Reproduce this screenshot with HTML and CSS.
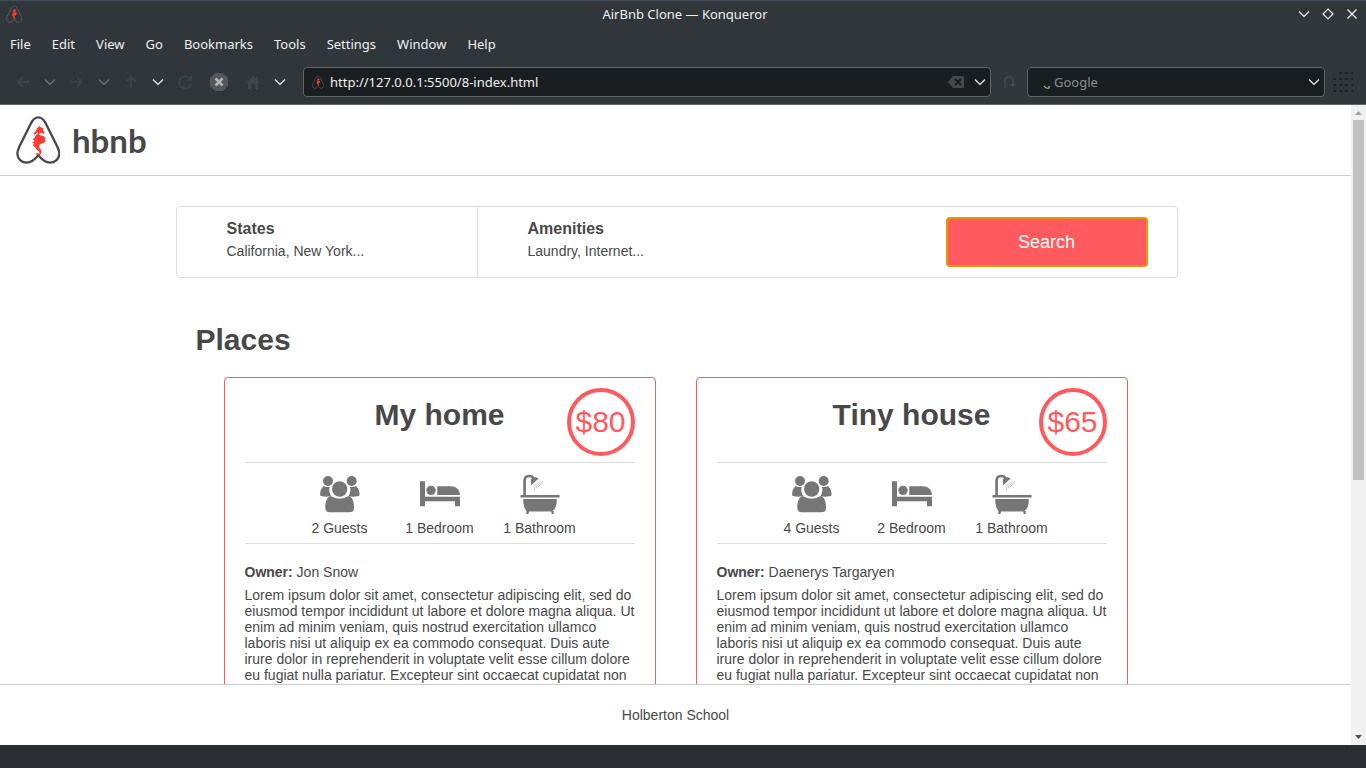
FILE: index.html
```html
<!DOCTYPE html>
<html lang="en">
<head>
<meta charset="utf-8">
<title>AirBnb Clone — Konqueror</title>
<link rel="stylesheet" href="styles.css">
</head>
<body>
<svg class="sprites" aria-hidden="true">
  <symbol id="logo" viewBox="48 36 132 144">
    <path d="M115 40C104 40 98 48 93 58L59 126C54 136 52 142 52 150C53 166 66 176 80 176C96 176 106 165 115 154C124 165 134 176 150 176C164 176 177 166 178 150C178 142 176 136 171 126L137 58C132 48 126 40 115 40Z" fill="none" stroke="currentColor" stroke-width="7" stroke-linejoin="round"/>
    <path d="M111 73L119 66L123 70L129 73L130 80L133 84L131 91L125 86L118 88L118 93L130 96L137 102L134 107L137 111L132 116L126 118L119 122L117 128L119 133L124 139L124 147L119 154L110 153L108 148L113 147L118 149L118 143L109 136L105 129L97 123L104 120L96 115L104 111L98 105L104 101L106 96L112 90L114 84L104 92L100 89L108 80Z" fill="#ff3b30"/>
  </symbol>
  <symbol id="chev" viewBox="0 0 12 8"><path d="M1 1.5L6 6.5L11 1.5" fill="none" stroke="currentColor" stroke-width="1.2"/></symbol>
  <symbol id="guests" viewBox="60 30 120 112">
    <g fill="currentColor"><circle cx="84" cy="47" r="15"/><circle cx="155" cy="47" r="15"/>
    <path d="M71 62C62 70 59 82 61 91Q75 96 94 93Q84 76 90 64Q80 67 71 62Z"/><path d="M168 62C177 70 180 82 178 91Q164 96 145 93Q155 76 149 64Q160 67 168 62Z"/>
    <circle cx="119" cy="71" r="23"/><path d="M92 92C80 96 76 110 76 127Q76 141 89 141H149Q162 141 162 127C162 110 158 96 146 92Q119 108 92 92Z"/></g>
  </symbol>
  <symbol id="bed" viewBox="0 0 120 76"><g fill="currentColor"><path d="M0 0H15V46H120V75H105V60H15V75H0Z"/><circle cx="33" cy="27" r="14"/><path d="M52 15H91C108 15 119 25 120 41H52Z"/></g></symbol>
  <symbol id="bath" viewBox="210 26 120 122">
    <path d="M223 92V47C223 28 247 28 251 42" fill="none" stroke="currentColor" stroke-width="8"/>
    <g fill="currentColor"><path d="M243 60L242 43Q247 34 258 36L266 40Z"/><rect x="210" y="90" width="120" height="8" rx="3"/><path d="M219 102H321V114Q319 133 308 139H312V147Q308 150 305 146V140H236V146Q232 150 228 147V137Q221 131 219 114Z"/></g>
    <path d="M254 61L272 48M253 68L281 47M252 74L276 55M265 65L269 62" fill="none" stroke="currentColor" stroke-width="2" stroke-dasharray="4 3"/>
  </symbol>
</svg>

<header class="titlebar">
  <svg class="app-icon" width="16" height="18"><use href="#logo"/></svg>
  <h1 class="window-title">AirBnb Clone — Konqueror</h1>
  <div class="window-buttons">
    <button aria-label="Minimize"><svg width="12" height="8"><use href="#chev"/></svg></button>
    <button aria-label="Maximize"><svg width="12" height="12" viewBox="0 0 12 12"><path d="M6 1L11 6L6 11L1 6Z" fill="none" stroke="currentColor" stroke-width="1.2"/></svg></button>
    <button aria-label="Close"><svg width="12" height="12" viewBox="0 0 12 12"><path d="M1.500 1.500L10.500 10.500M10.500 1.500L1.500 10.500" stroke="currentColor" stroke-width="1.3"/></svg></button>
  </div>
</header>
<nav class="menubar">
  <button>File</button><button>Edit</button><button>View</button><button>Go</button><button>Bookmarks</button><button>Tools</button><button>Settings</button><button>Window</button><button>Help</button>
</nav>
<div class="toolbar">
  <button class="tool dim" aria-label="Back"><svg width="14" height="12" viewBox="0 0 14 12"><path d="M13 6H2M7 1L2 6L7 11" fill="none" stroke="currentColor" stroke-width="2"/></svg></button>
  <button class="tool mid" aria-label="Back history"><svg width="12" height="8"><use href="#chev"/></svg></button>
  <button class="tool dim" aria-label="Forward"><svg width="14" height="12" viewBox="0 0 14 12"><path d="M1 6H12M7 1L12 6L7 11" fill="none" stroke="currentColor" stroke-width="2"/></svg></button>
  <button class="tool mid" aria-label="Forward history"><svg width="12" height="8"><use href="#chev"/></svg></button>
  <button class="tool dim" aria-label="Up"><svg width="12" height="14" viewBox="0 0 12 14"><path d="M6 13V2M1 7L6 2L11 7" fill="none" stroke="currentColor" stroke-width="2"/></svg></button>
  <button class="tool" aria-label="Up history"><svg width="12" height="8"><use href="#chev"/></svg></button>
  <button class="tool dim" aria-label="Reload"><svg width="16" height="16" viewBox="0 0 16 16"><path d="M13 5A6 6 0 1 0 14 10" fill="none" stroke="currentColor" stroke-width="2"/><path d="M15 1V7H9Z" fill="currentColor"/></svg></button>
  <button class="tool stop" aria-label="Stop"><svg width="18" height="18" viewBox="0 0 18 18"><path d="M5 0H13L18 5V13L13 18H5L0 13V5Z" fill="#53565a"/><path d="M5.500 5.500L12.500 12.500M12.500 5.500L5.500 12.500" stroke="#b4b6b8" stroke-width="2.500"/></svg></button>
  <button class="tool dim" aria-label="Home"><svg width="14" height="14" viewBox="0 0 14 14"><path d="M0 8L7 1L10 4V2H12V6L14 8H12V14H9V9H5V14H2V8Z" fill="#424446"/></svg></button>
  <button class="tool" aria-label="Home history"><svg width="12" height="8"><use href="#chev"/></svg></button>
  <div class="field address">
    <svg class="favicon" width="12" height="14"><use href="#logo"/></svg>
    <input type="text" aria-label="Location" value="http://127.0.0.1:5500/8-index.html">
    <button class="clear" aria-label="Clear location"><svg width="16" height="12" viewBox="0 0 16 12"><path d="M0 6L5 0H16V12H5Z" fill="#45484a"/><path d="M7 3L13 9M13 3L7 9" stroke="#1b1e20" stroke-width="2"/></svg></button>
    <button aria-label="Location history"><svg width="12" height="8"><use href="#chev"/></svg></button>
  </div>
  <button class="tool go" aria-label="Go"><svg width="13" height="14" viewBox="0 0 13 14"><path d="M1 12H3M2 10V6A4 4 0 0 1 10 6V9" fill="none" stroke="#43474a" stroke-width="2"/><path d="M6 9H13L10 13Z" fill="#43474a"/></svg></button>
  <div class="field engine">
    <svg width="8" height="16" viewBox="0 0 8 16"><path d="M1 12Q3 15 6 14V12" fill="none" stroke="#b4b6b8" stroke-width="1.200"/></svg>
    <input type="search" aria-label="Web search" placeholder="Google">
    <button aria-label="Search engines"><svg width="12" height="8"><use href="#chev"/></svg></button>
  </div>
  <div class="throbber"><svg width="20" height="22" viewBox="0 0 20 22"><path d="M6 2H20M0 8H20M0 14H20M0 20H20" stroke="#1f2225" stroke-width="2" stroke-dasharray="3 3"/></svg></div>
</div>

<div class="viewport">
  <div class="page">
    <header class="site-header">
      <a class="brand" href="#"><svg width="44" height="48"><use href="#logo"/></svg><span>hbnb</span></a>
    </header>
    <main class="content">
      <div class="container">
        <section class="filters">
          <div class="filter states"><h3>States</h3><h4>California, New York...</h4></div>
          <div class="filter"><h3>Amenities</h3><h4>Laundry, Internet...</h4></div>
          <button class="search">Search</button>
        </section>
        <section class="places">
          <h1>Places</h1>
          <div class="cards">
            <article class="card">
              <div class="price">$80</div>
              <h2>My home</h2>
              <ul class="info">
                <li><svg width="40" height="40"><use href="#guests"/></svg>2 Guests</li>
                <li><svg width="40" height="40"><use href="#bed"/></svg>1 Bedroom</li>
                <li><svg width="40" height="40"><use href="#bath"/></svg>1 Bathroom</li>
              </ul>
              <p class="owner"><strong>Owner:</strong> Jon Snow</p>
              <p class="description">Lorem ipsum dolor sit amet, consectetur adipiscing elit, sed do eiusmod tempor incididunt ut labore et dolore magna aliqua. Ut enim ad minim veniam, quis nostrud exercitation ullamco laboris nisi ut aliquip ex ea commodo consequat. Duis aute irure dolor in reprehenderit in voluptate velit esse cillum dolore eu fugiat nulla pariatur. Excepteur sint occaecat cupidatat non</p>
            </article>
            <article class="card">
              <div class="price">$65</div>
              <h2>Tiny house</h2>
              <ul class="info">
                <li><svg width="40" height="40"><use href="#guests"/></svg>4 Guests</li>
                <li><svg width="40" height="40"><use href="#bed"/></svg>2 Bedroom</li>
                <li><svg width="40" height="40"><use href="#bath"/></svg>1 Bathroom</li>
              </ul>
              <p class="owner"><strong>Owner:</strong> Daenerys Targaryen</p>
              <p class="description">Lorem ipsum dolor sit amet, consectetur adipiscing elit, sed do eiusmod tempor incididunt ut labore et dolore magna aliqua. Ut enim ad minim veniam, quis nostrud exercitation ullamco laboris nisi ut aliquip ex ea commodo consequat. Duis aute irure dolor in reprehenderit in voluptate velit esse cillum dolore eu fugiat nulla pariatur. Excepteur sint occaecat cupidatat non</p>
            </article>
          </div>
        </section>
      </div>
    </main>
    <footer class="site-footer">Holberton School</footer>
  </div>
  <div class="scrollbar">
    <svg width="15" height="15" viewBox="0 0 15 15"><path d="M4 10L7.500 6L11 10Z" fill="#a3a3a3"/></svg>
    <div class="track"><div class="thumb"></div></div>
    <svg width="15" height="15" viewBox="0 0 15 15"><path d="M4 5L7.500 9L11 5Z" fill="#505050"/></svg>
  </div>
</div>
<div class="statusbar"></div>
</body>
</html>
```

FILE: styles.css
```css
* { box-sizing: border-box; margin: 0; padding: 0; }
body {
  display: flex;
  flex-direction: column;
  height: 100vh;
  overflow: hidden;
  background: #31363b;
  color: #eff0f1;
  font: 13px "Noto Sans", sans-serif;
}
button, input { font: inherit; color: inherit; background: none; border: 0; outline: 0; }
svg { display: block; flex: none; }
.sprites { display: none; }

.titlebar {
  display: grid;
  grid-template-columns: 1fr auto 1fr;
  align-items: center;
  height: 28px;
  padding: 0 2px 2px 6px;
  border-top: 1px solid #434a59;
}
.app-icon, .favicon { color: #5a5e61; }
.window-title { font-size: 13px; font-weight: 400; }
.window-buttons { display: flex; justify-content: flex-end; }
.window-buttons button { display: flex; align-items: center; justify-content: center; width: 24px; height: 20px; }
.menubar { display: flex; align-items: center; gap: 21px; height: 32px; padding: 0 10px; }
.toolbar {
  display: flex;
  align-items: center;
  height: 45px;
  padding-left: 9px;
  border-bottom: 1px solid #626568;
}
.tool { display: flex; align-items: center; justify-content: center; width: 27px; height: 30px; }
.tool.dim { color: #3e4245; }
.tool.mid { color: #73777a; }
.tool.stop { width: 41px; }
.tool.go { width: 36px; }
.field {
  display: flex;
  align-items: center;
  height: 30px;
  border: 1px solid #626568;
  border-radius: 4px;
  background: #1b1e20;
}
.field input { flex: 1; min-width: 0; }
.field button { display: flex; padding: 0 4px; }
.address { flex: 1; margin-left: 10px; padding-left: 8px; gap: 6px; }
.address .clear { padding: 0; }
.engine { width: 298px; padding-left: 15px; gap: 3px; }
.engine input::placeholder { color: #8b8d8f; opacity: 1; }
.throbber { width: 41px; padding-left: 8px; }

.viewport {
  display: flex;
  flex: 1;
  min-height: 0;
  background: #fff;
  color: #484848;
  font: 14px/16px "Liberation Sans", Arial, sans-serif;
}
.page { display: flex; flex: 1; flex-direction: column; min-width: 0; }
.site-header { display: flex; align-items: center; height: 71px; padding: 0 16px; border-bottom: 1px solid #ccc; }
.brand { display: flex; align-items: center; gap: 12px; color: #484848; font: 700 33px/40px Lato, sans-serif; text-decoration: none; }
.content { flex: 1; min-height: 0; overflow: hidden; }
.container { max-width: 1000px; margin: 30px auto 0; }
.filters {
  display: flex;
  align-items: center;
  width: calc(100% + 2px);
  height: 72px;
  border: 1px solid #ddd;
  border-radius: 4px;
}
.filter { flex: none; width: 300px; height: 70px; padding: 12px 0 0 50px; }
.states { width: 301px; border-right: 1px solid #ddd; }
.filter h3 { font-size: 16px; line-height: 20px; }
.filter h4 { margin-top: 4px; font-size: 14px; font-weight: 400; }
.search {
  width: 202px;
  height: 50px;
  margin: 0 29px 0 auto;
  border: 2px solid #e59700;
  border-radius: 4px;
  background: #ff5a5f;
  color: #fff;
  font-size: 18px;
}
.places { padding-top: 44px; }
.places h1 { padding-left: 20px; font-size: 30px; line-height: 36px; }
.cards { display: flex; justify-content: center; gap: 40px; margin-top: 19px; }
.card {
  position: relative;
  width: 432px;
  min-height: 360px;
  padding: 20px;
  border: 1px solid #ff5a5f;
  border-radius: 4px;
}
.card h2 { font-size: 30px; line-height: 34px; text-align: center; }
.price {
  position: absolute;
  top: 10px;
  right: 20px;
  width: 68px;
  height: 68px;
  border: 4px solid #ff5a5f;
  border-radius: 50%;
  color: #ff5a5f;
  font-size: 30px;
  line-height: 60px;
  text-align: center;
}
.info {
  display: flex;
  justify-content: center;
  height: 82px;
  margin-top: 30px;
  padding-top: 11px;
  border: solid #ddd;
  border-width: 1px 0;
  list-style: none;
}
.info li { display: flex; flex-direction: column; align-items: center; gap: 6px; width: 100px; }
.info svg { color: #767676; }
.owner { margin-top: 20px; }
.description { margin-top: 7px; }
.site-footer { height: 61px; border-top: 1px solid #ccc; line-height: 60px; text-align: center; }

.scrollbar { display: flex; flex-direction: column; width: 15px; background: #f1f1f1; }
.track { flex: 1; padding: 0 2px; }
.thumb { height: 59%; background: #c1c1c1; }
.statusbar { height: 23px; background: #2a2e32; }
```
